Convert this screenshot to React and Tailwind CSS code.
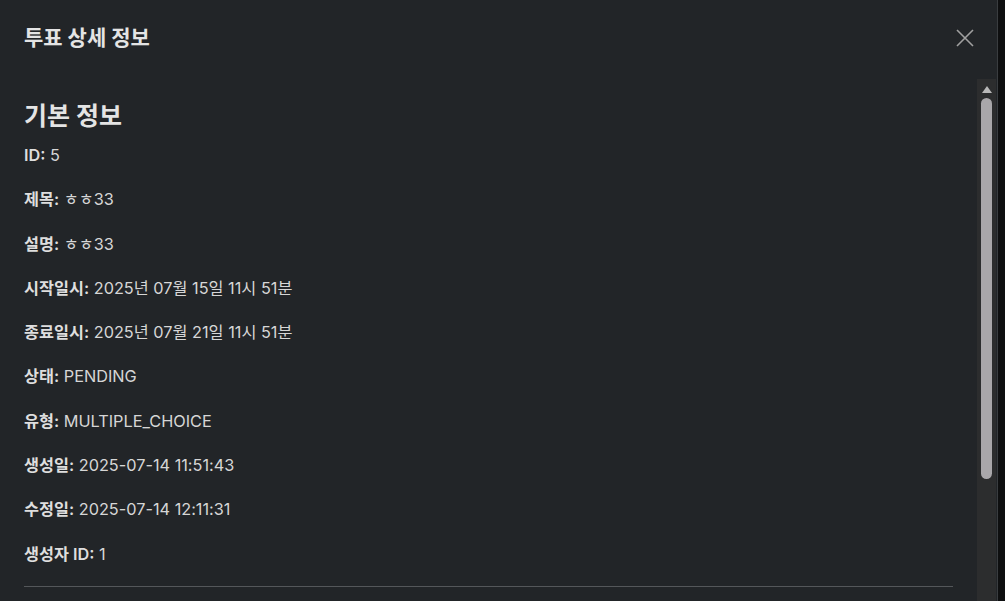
const fields = [
  ["ID", "5"],
  ["제목", "ㅎㅎ33"],
  ["설명", "ㅎㅎ33"],
  ["시작일시", "2025년 07월 15일 11시 51분"],
  ["종료일시", "2025년 07월 21일 11시 51분"],
  ["상태", "PENDING"],
  ["유형", "MULTIPLE_CHOICE"],
  ["생성일", "2025-07-14 11:51:43"],
  ["수정일", "2025-07-14 12:11:31"],
  ["생성자 ID", "1"],
];

const App = () => {
  return (
    <div
      className="flex h-[601px] w-full overflow-hidden bg-[#0e0f10] text-[#d6d6d6]"
      style={{ fontFamily: "Inter, 'Noto Sans CJK KR', sans-serif" }}
    >
      <div className="flex flex-1 flex-col bg-[#222528] border-r border-[#3a3d40]">
        {/* header */}
        <div className="flex h-[79px] shrink-0 items-center justify-between pl-6 pr-[22px] pb-1">
          <h2 className="text-[21px] font-bold text-[#e4e4e4]">투표 상세 정보</h2>
          <button className="text-[#a0a0a0]">
            <svg width="20" height="20" viewBox="0 0 20 20" fill="none" stroke="currentColor" strokeWidth="1.6">
              <path d="M2 2L18 18M18 2L2 18" />
            </svg>
          </button>
        </div>

        {/* body */}
        <div className="flex min-h-0 flex-1">
          <div className="flex-1 overflow-hidden pl-6 pr-6 pt-[21px]">
            <h3 className="text-[25px] font-bold leading-8 text-[#e4e4e4]">기본 정보</h3>
            <div className="mt-[12px] flex flex-col gap-[22.3px] text-[16.3px] leading-[22px]">
              {fields.map(([label, value]) => (
                <p key={label}>
                  <span className="font-semibold text-[#dedede]">{label}:</span> {value}
                </p>
              ))}
            </div>
            <div className="mt-[21px] h-px bg-[#54575a]"></div>
          </div>

          {/* scrollbar */}
          <div className="flex w-[19px] shrink-0 flex-col items-center bg-[#2c2d2e] pt-[6px] mr-[1px]">
            <svg width="12" height="9" viewBox="0 0 12 9" className="text-[#b8b8b8]">
              <path d="M6 1L11 8H1Z" fill="currentColor" />
            </svg>
            <div className="mt-[4px] h-[381px] w-[11px] rounded-full bg-[#a9a7aa]"></div>
          </div>
        </div>
      </div>
      <div className="w-[7px] shrink-0"></div>
    </div>
  );
};

export default App;
